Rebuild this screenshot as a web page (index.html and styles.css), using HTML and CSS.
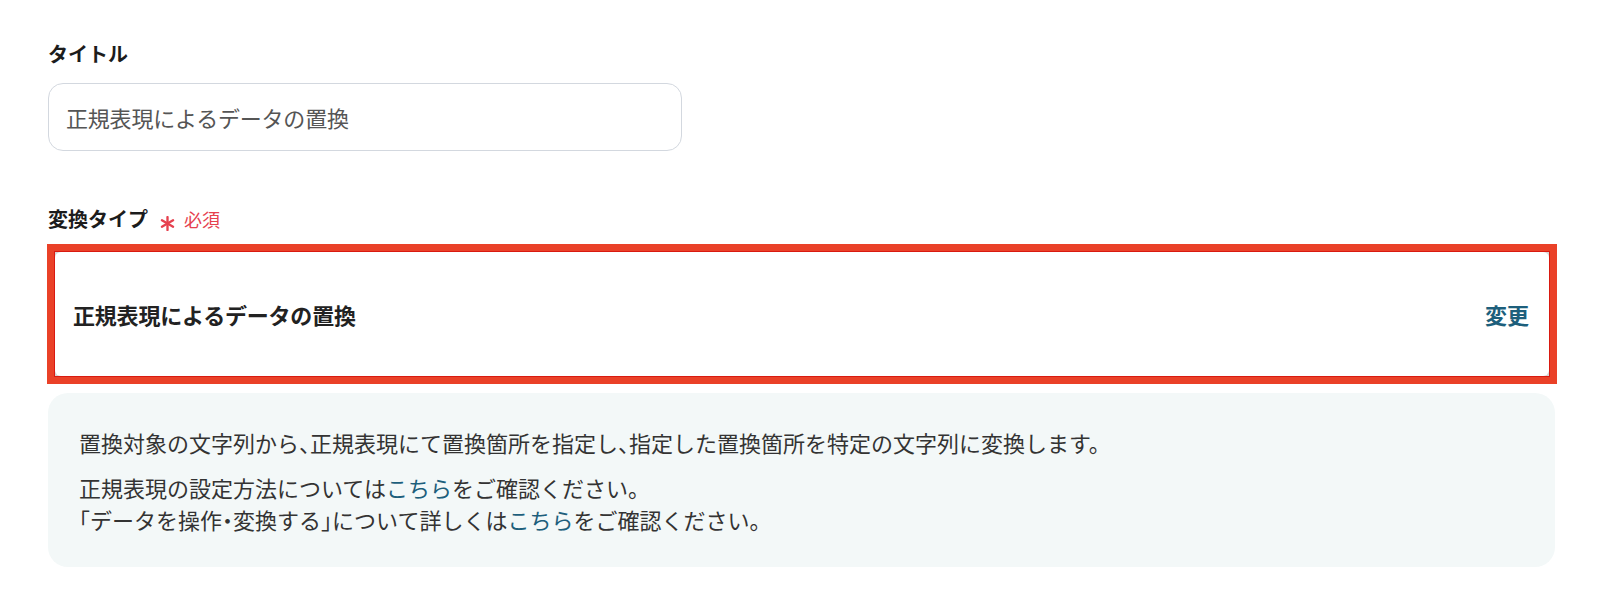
FILE: index.html
```html
<!DOCTYPE html>
<html lang="ja">
<head>
<meta charset="utf-8">
<title>変換タイプ</title>
<link rel="stylesheet" href="styles.css">
</head>
<body>
<div class="page">
  <div class="field-label">タイトル</div>
  <div class="text-input">正規表現によるデータの置換</div>

  <div class="field-label req-label">
    <span>変換タイプ</span>
    <span class="required">
      <svg class="asterisk" viewBox="0 0 14 14" width="15" height="15" aria-hidden="true">
        <g stroke="#e6414f" stroke-width="2.2" stroke-linecap="round">
          <line x1="7" y1="1" x2="7" y2="13"/>
          <line x1="1.8" y1="4" x2="12.2" y2="10"/>
          <line x1="1.8" y1="10" x2="12.2" y2="4"/>
        </g>
      </svg>
      <span class="req-text">必須</span>
    </span>
  </div>

  <div class="highlight">
    <div class="type-card">
      <span class="type-name">正規表現によるデータの置換</span>
      <a class="change-link" href="#">変更</a>
    </div>
  </div>

  <div class="info-box">
    <p class="info-p">置換対象の文字列から<span class="punct">、</span>正規表現にて置換箇所を指定し<span class="punct">、</span>指定した置換箇所を特定の文字列に変換します。</p>
    <p class="info-p">正規表現の設定方法については<a class="link" href="#">こちら</a>をご確認ください。<br><span class="punct">「</span>データを操作<span class="punct">・</span>変換する<span class="punct">」</span>について詳しくは<a class="link" href="#">こちら</a>をご確認ください。</p>
  </div>
</div>
</body>
</html>
```
FILE: styles.css
```css
html, body {
  margin: 0;
  padding: 0;
  background: #ffffff;
}

body {
  font-family: "Noto Sans CJK JP", "Noto Sans", sans-serif;
  color: #222222;
}

.page {
  padding: 40px 45px 0 48px;
}

.field-label {
  font-size: 20px;
  font-weight: 700;
  line-height: 28px;
  color: #1c1c1c;
}

.text-input {
  margin-top: 15px;
  box-sizing: border-box;
  width: 634px;
  height: 68px;
  border: 1px solid #d3d8df;
  border-radius: 15px;
  padding-left: 17px;
  display: flex;
  align-items: center;
  font-size: 22px;
  color: #555555;
  letter-spacing: -0.2px;
}

.req-label {
  margin-top: 54px;
  display: flex;
  align-items: center;
}

.required {
  display: inline-flex;
  align-items: center;
  margin-left: 12px;
  color: #e6414f;
}

.asterisk {
  margin-top: 8px;
}

.req-text {
  margin-left: 9px;
  font-size: 18px;
  font-weight: 400;
}

.highlight {
  margin: 11px -2px 0 -1px;
  border: 7px solid #ea4128;
  box-shadow: inset 0 0 0 1px #d91a10;
  background: #d6d6d6;
  padding: 1px;
}

.type-card {
  height: 124px;
  background: #ffffff;
  border-radius: 6px;
  display: flex;
  align-items: center;
  justify-content: space-between;
  padding: 0 20px 0 18px;
}

.type-name {
  font-size: 22px;
  font-weight: 700;
  color: #222222;
  letter-spacing: -0.2px;
}

.change-link {
  font-size: 22px;
  font-weight: 700;
  color: #1d5f7c;
  text-decoration: none;
}

.info-box {
  margin-top: 9px;
  background: #f3f8f8;
  border-radius: 20px;
  padding: 33px 31px 32px 31px;
  height: 174px;
  box-sizing: border-box;
}

.info-p {
  margin: 0;
  font-size: 22px;
  line-height: 32px;
  color: #333333;
}

.info-p + .info-p {
  margin-top: 13px;
}

.punct {
  font-feature-settings: "halt";
}

.link {
  color: #1d5f7c;
  text-decoration: none;
}
```
